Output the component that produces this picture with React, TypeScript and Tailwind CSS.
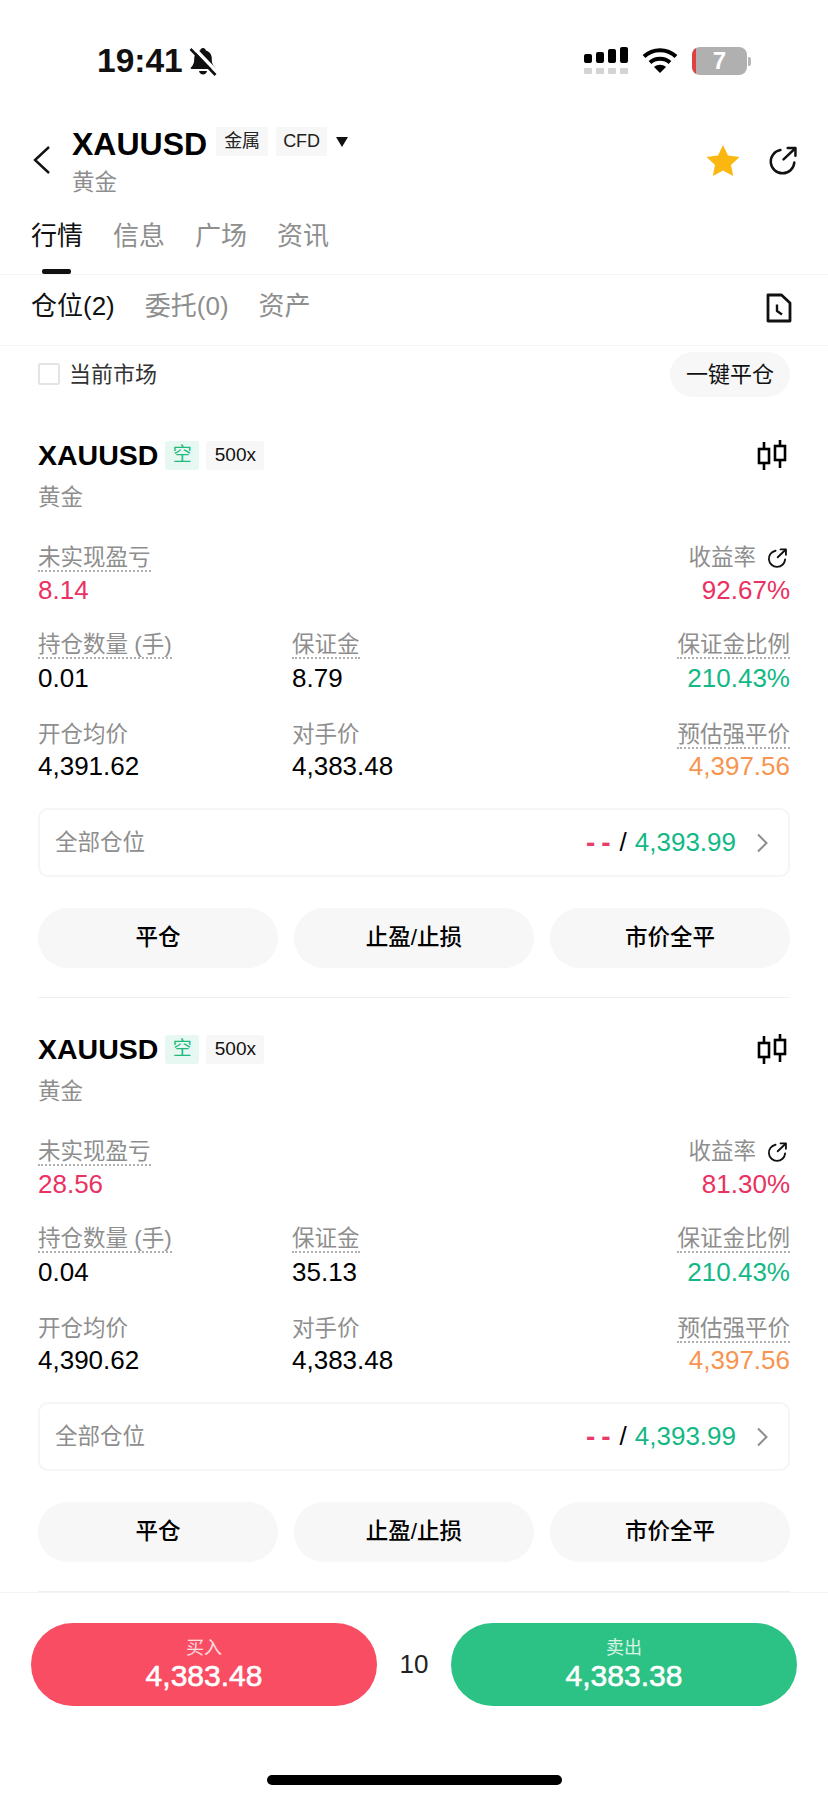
const FONT = "font-['Liberation_Sans','Noto_Sans_CJK_SC',sans-serif]";

function ShareIcon({ size, width }: { size: number; width: number }) {
  return (
    <svg width={size} height={size} viewBox="0 0 28 28" fill="none" stroke="#111" strokeWidth={width} strokeLinecap="round" strokeLinejoin="round">
      <path d="M12 3.800A11.400 11.400 0 1 0 25.400 16" />
      <path d="M15 13 26 2.500" />
      <path d="M19 2h7.500v7.500" />
    </svg>
  );
}

function CandleIcon() {
  return (
    <svg width="30" height="32" viewBox="0 0 30 32" fill="none" stroke="#000" strokeWidth="2.600">
      <rect x="2" y="10" width="10" height="14" />
      <path d="M7 3v7M7 24v7" />
      <rect x="18" y="7" width="10" height="14" />
      <path d="M23 1v6M23 21v8" />
    </svg>
  );
}

function BellIcon() {
  return (
    <svg width="28" height="29" viewBox="0 0 28 29" fill="none">
      <path d="M14 1c1.600 0 2.700 1 2.800 2.400 4 1.100 6 4.300 6 8.600 0 4.500 1.200 6.300 3.300 8.500.6.700.2 1.500-.7 1.500H2.600c-.9 0-1.300-.8-.7-1.500C4 18.300 5.200 16.500 5.200 12c0-4.300 2-7.500 6-8.600C11.300 2 12.400 1 14 1z" fill="#111" />
      <path d="M10 24h8c-.4 2.200-2 3.600-4 3.600S10.400 26.200 10 24z" fill="#111" />
      <path d="M4 0 28 25" stroke="#fff" strokeWidth="3.600" />
      <path d="M1.500 2 26.500 28" stroke="#111" strokeWidth="2.600" />
    </svg>
  );
}

function Label({ text, dotted }: { text: string; dotted?: boolean }) {
  return (
    <span className={`inline-block h-[27px] text-[22.500px] leading-[26px] text-[#8e8e8e] ${dotted ? "border-b-2 border-dotted border-[#b0b0b0]" : ""}`}>
      {text}
    </span>
  );
}

type Position = { pnl: string; rate: string; qty: string; margin: string; open: string };

function Stat({ label, value, dotted, color, right, tight }: { label: string; value: string; dotted?: boolean; color?: string; right?: boolean; tight?: boolean }) {
  return (
    <div className={`flex flex-col ${right ? "items-end" : "items-start"}`}>
      <Label text={label} dotted={dotted} />
      <span className={`${tight ? "mt-[2px]" : "mt-[4px]"} text-[26px] leading-[30px] ${color ?? "text-black"}`}>{value}</span>
    </div>
  );
}

function PositionCard({ p }: { p: Position }) {
  return (
    <section className="mx-[38px] h-[594px] border-b border-[#f0f0f0] pt-[36px]">
      <div className="flex h-[30px] items-center">
        <span className="text-[28.500px] font-bold leading-none text-black">XAUUSD</span>
        <span className="ml-[7px] flex h-[29px] w-[34px] items-center justify-center rounded-[3px] bg-[#e6f8f1] text-[19px] text-[#20b97e]">空</span>
        <span className="ml-[7px] flex h-[29px] w-[58px] items-center justify-center rounded-[3px] bg-[#f7f7f7] text-[19px] text-[#111]">500x</span>
        <span className="ml-auto mr-[3px]">
          <CandleIcon />
        </span>
      </div>
      <div className="mt-[14px] text-[22.500px] leading-[28px] text-[#8e8e8e]">黄金</div>

      <div className="mt-[33px] flex justify-between">
        <div className="flex flex-col items-start">
          <Label text="未实现盈亏" dotted />
          <span className="mt-[3px] text-[26px] leading-[30px] text-[#ea3162]">{p.pnl}</span>
        </div>
        <div className="flex flex-col items-end">
          <div className="flex h-[27px] items-start gap-[11px]">
            <Label text="收益率" />
            <span className="mt-[3px] mr-[3px]">
              <ShareIcon size={20} width={2.600} />
            </span>
          </div>
          <span className="mt-[3px] text-[26px] leading-[30px] text-[#ea3162]">{p.rate}</span>
        </div>
      </div>

      <div className="mt-[27px] grid grid-cols-[254px_1fr_auto]">
        <Stat label="持仓数量 (手)" value={p.qty} dotted />
        <Stat label="保证金" value={p.margin} dotted />
        <Stat label="保证金比例" value="210.43%" dotted color="text-[#13b886]" right />
      </div>

      <div className="mt-[29px] grid grid-cols-[254px_1fr_auto]">
        <Stat label="开仓均价" value={p.open} tight />
        <Stat label="对手价" value="4,383.48" tight />
        <Stat label="预估强平价" value="4,397.56" dotted color="text-[#f7944f]" right tight />
      </div>

      <div className="mt-[27px] flex h-[69px] items-center rounded-[10px] border-2 border-[#f5f5f5] pl-[15px] pr-[20px]">
        <span className="text-[22.500px] text-[#8e8e8e]">全部仓位</span>
        <span className="ml-auto text-[28px] font-bold tracking-[6px] text-[#e83c68]">--</span>
        <span className="ml-[3px] text-[26px] text-black">/</span>
        <span className="ml-[8px] text-[26px] text-[#13b886]">4,393.99</span>
        <svg className="ml-[20px]" width="12" height="20" viewBox="0 0 12 20" fill="none" stroke="#8e8e8e" strokeWidth="2">
          <path d="M2 1.500 10.500 10 2 18.500" />
        </svg>
      </div>

      <div className="mt-[31px] grid grid-cols-3 gap-[16px]">
        {["平仓", "止盈/止损", "市价全平"].map((t) => (
          <button key={t} className="h-[60px] rounded-[30px] bg-[#f7f7f7] text-[22.500px] font-medium text-black">
            {t}
          </button>
        ))}
      </div>
    </section>
  );
}

const positions: Position[] = [
  { pnl: "8.14", rate: "92.67%", qty: "0.01", margin: "8.79", open: "4,391.62" },
  { pnl: "28.56", rate: "81.30%", qty: "0.04", margin: "35.13", open: "4,390.62" },
];

export default function App() {
  return (
    <div className={`flex h-[1800px] w-[828px] flex-col overflow-hidden bg-white ${FONT}`}>
      {/* Status bar */}
      <div className="flex h-[127px] shrink-0 items-start pt-[43px]">
        <span className="ml-[97px] text-[33.500px] font-bold leading-[36px] text-[#111]">19:41</span>
        <span className="ml-[6px] mt-[4px]">
          <BellIcon />
        </span>
        <div className="ml-auto mr-[77px] mt-[4px] flex items-start">
          <div className="flex flex-col gap-[5px]">
            <div className="flex items-end gap-[4px]">
              {[9, 11, 14, 16].map((h) => (
                <span key={h} className="w-[8px] rounded-[2px] bg-black" style={{ height: h }} />
              ))}
            </div>
            <div className="flex gap-[4px]">
              {[0, 1, 2, 3].map((i) => (
                <span key={i} className="h-[6px] w-[8px] rounded-[1px] bg-[#d4d4d4]" />
              ))}
            </div>
          </div>
          <svg className="ml-[14px]" width="36" height="26" viewBox="0 0 36 26" fill="none" stroke="#000" strokeWidth="4">
            <path d="M2 9.500C11 1 25 1 34 9.500" />
            <path d="M8 15.500C13.500 10.500 22.500 10.500 28 15.500" />
            <path d="M12 20 18 26 24 20C20.500 17 15.500 17 12 20Z" fill="#000" stroke="none" />
          </svg>
          <div className="ml-[14px] flex items-center">
            <div className="relative flex h-[28px] w-[55px] items-center justify-center overflow-hidden rounded-[8px] bg-[#b0b0b0] text-[24px] font-bold text-white">
              <span className="absolute inset-y-0 left-0 w-[4px] bg-[#e0403f]" />7
            </div>
            <span className="ml-[1px] h-[9px] w-[3px] rounded-r-[2px] bg-[#b8b8b8]" />
          </div>
        </div>
      </div>

      {/* Symbol header */}
      <div className="flex h-[70px] shrink-0">
        <svg className="ml-[33px] mt-[19px]" width="18" height="28" viewBox="0 0 18 28" fill="none" stroke="#111" strokeWidth="2.400">
          <path d="M16 1 2 14l14 13" />
        </svg>
        <div className="ml-[21px] flex flex-col">
          <div className="flex items-start">
            <span className="text-[32px] font-bold leading-[34px] text-black">XAUUSD</span>
            <span className="ml-[9px] flex h-[29px] w-[52px] items-center justify-center bg-[#f7f7f7] text-[18px] text-[#222]">金属</span>
            <span className="ml-[8px] flex h-[29px] w-[51px] items-center justify-center bg-[#f7f7f7] text-[18px] text-[#222]">CFD</span>
            <svg className="ml-[9px] mt-[10px]" width="12" height="10" viewBox="0 0 12 10" fill="#111">
              <path d="M0 0h12L6 10z" />
            </svg>
          </div>
          <span className="mt-[8px] text-[22.500px] leading-[28px] text-[#8e8e8e]">黄金</span>
        </div>
        <svg className="ml-auto mt-[17px]" width="34" height="32" viewBox="0 0 34 32" fill="#fab710">
          <path d="M17 1l5 10.500 11.500 1.500-8.500 8L27.200 32 17 26.500 6.800 32 9 21 .5 13 12 11.500z" />
        </svg>
        <span className="ml-[28px] mr-[31px] mt-[19px]">
          <ShareIcon size={29} width={2.400} />
        </span>
      </div>

      {/* Main tabs */}
      <div className="relative flex h-[77px] shrink-0 gap-[30px] pl-[31px] pt-[23px] text-[26px] leading-[32px] text-[#8e8e8e]">
        <span className="text-[#111]">行情</span>
        <span>信息</span>
        <span>广场</span>
        <span>资讯</span>
        <span className="absolute bottom-0 left-[42px] h-[5px] w-[29px] rounded-[2px] bg-[#111]" />
      </div>

      {/* Sub tabs */}
      <div className="flex h-[72px] shrink-0 items-start gap-[30px] border-t border-b border-[#f3f3f3] pl-[31px] pr-[36px] pt-[15px] text-[26px] leading-[32px] text-[#8e8e8e]">
        <span className="text-[#111]">仓位(2)</span>
        <span>委托(0)</span>
        <span>资产</span>
        <svg className="ml-auto mt-[3px]" width="26" height="30" viewBox="0 0 26 30" fill="none" stroke="#111" strokeWidth="2.800" strokeLinejoin="round">
          <path d="M2 2h13.500l8.500 8v18H2z" />
          <path d="M11 11.500v6.500l5 3.500" strokeWidth="2.400" />
        </svg>
      </div>

      {/* Filter row */}
      <div className="flex h-[58px] shrink-0 items-start pl-[38px] pr-[38px] pt-[6px]">
        <span className="mt-[11px] h-[22px] w-[22px] rounded-[2px] border-2 border-[#e4e4e4]" />
        <span className="ml-[9px] mt-[8px] text-[22px] leading-[30px] text-[#333]">当前市场</span>
        <button className="ml-auto h-[45px] w-[120px] rounded-full bg-[#f7f7f7] text-[22px] text-[#111]">一键平仓</button>
      </div>

      <main className="shrink-0">
        {positions.map((p) => (
          <PositionCard key={p.open} p={p} />
        ))}
      </main>

      {/* Buy / sell bar */}
      <div className="flex-1 border-t border-[#f3f3f3] pt-[30px]">
        <div className="flex items-center justify-between px-[31px]">
          <button className="flex h-[83px] w-[346px] flex-col items-center justify-center rounded-full bg-[#f94d63] pb-[2px] text-white">
            <span className="text-[18px] leading-[24px] text-white/80">买入</span>
            <span className="text-[30px] leading-[32px] [-webkit-text-stroke:0.6px_white]">4,383.48</span>
          </button>
          <span className="text-[26px] text-[#222]">10</span>
          <button className="flex h-[83px] w-[346px] flex-col items-center justify-center rounded-full bg-[#2dc285] pb-[2px] text-white">
            <span className="text-[18px] leading-[24px] text-white/80">卖出</span>
            <span className="text-[30px] leading-[32px] [-webkit-text-stroke:0.6px_white]">4,383.38</span>
          </button>
        </div>
        <div className="mx-auto mt-[69px] h-[10px] w-[295px] rounded-full bg-black" />
      </div>
    </div>
  );
}
